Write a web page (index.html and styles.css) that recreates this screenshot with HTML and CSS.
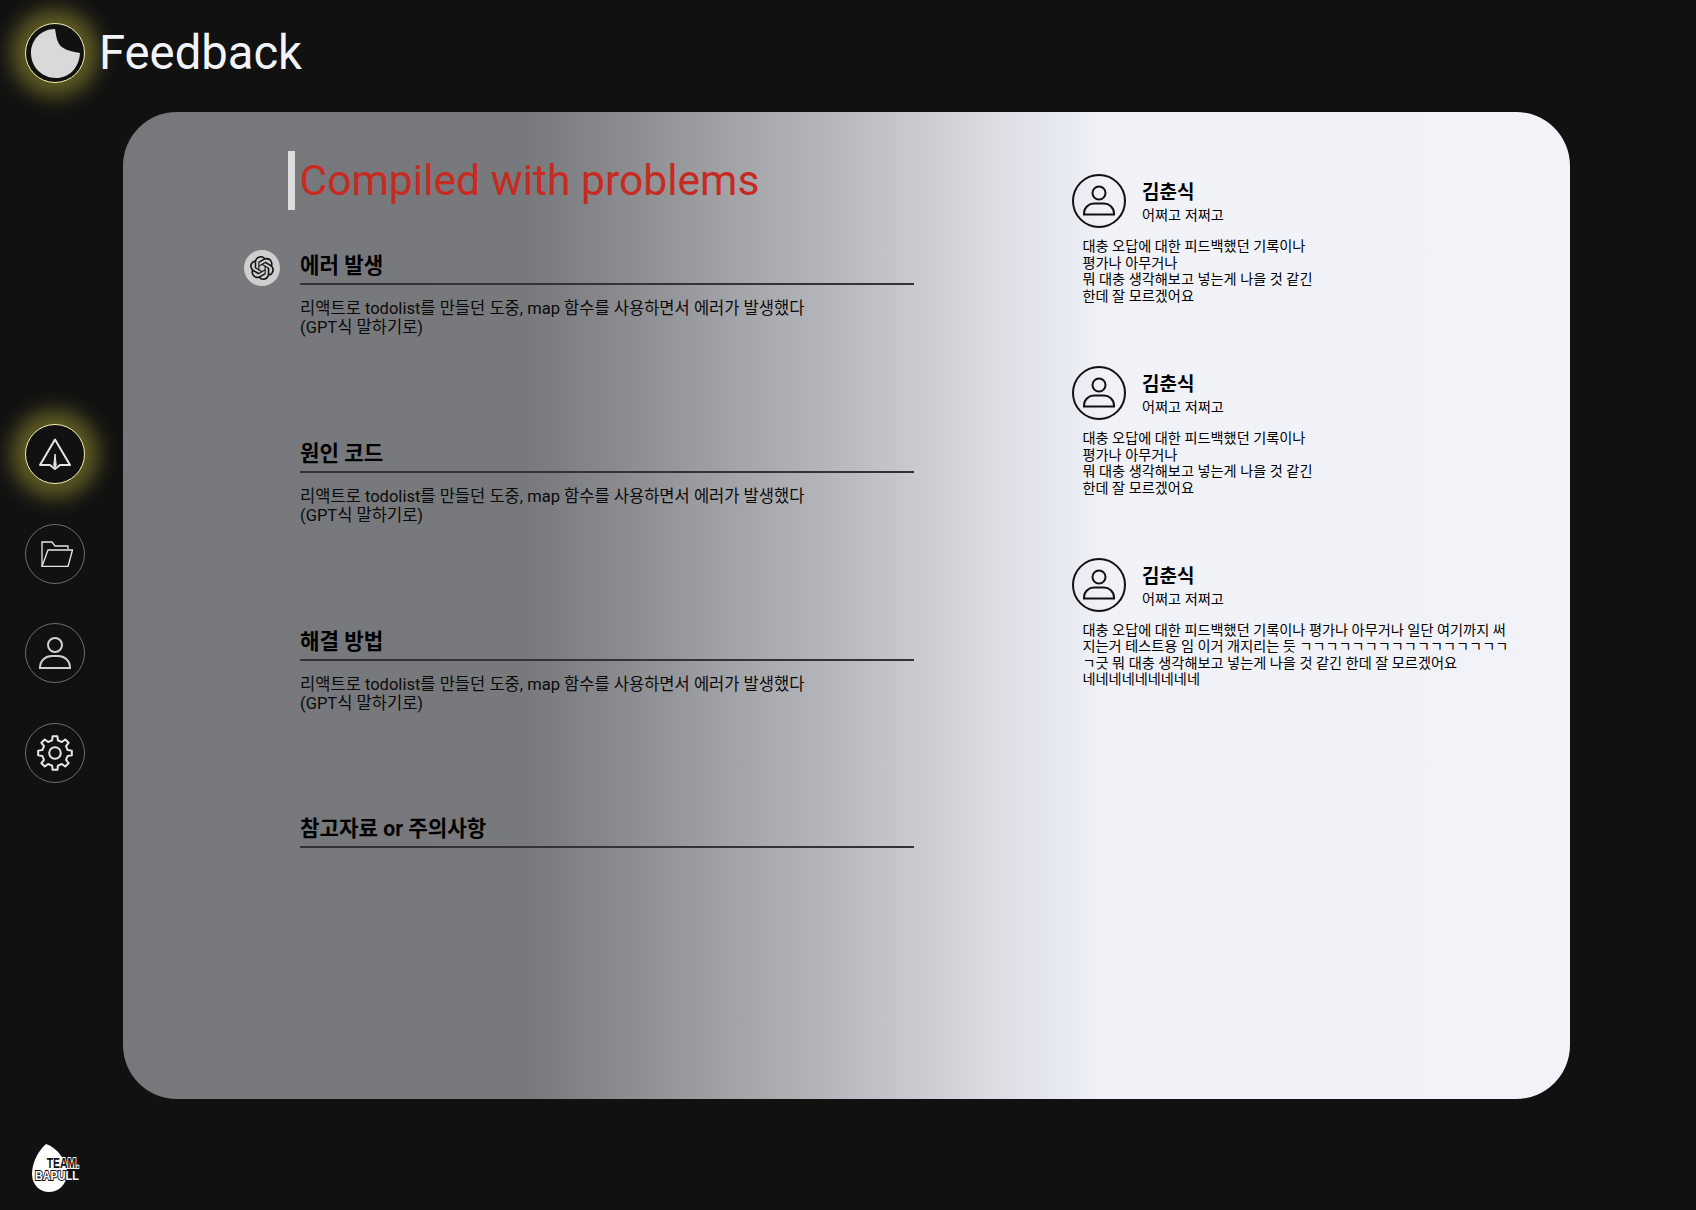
FILE: index.html
```html
<!DOCTYPE html>
<html lang="ko">
<head>
<meta charset="utf-8">
<title>Feedback</title>
<link rel="stylesheet" href="styles.css">
</head>
<body>
<div class="app">
  <header class="topbar">
    <div class="round-btn glow">
      <svg class="logo-sticker" viewBox="0 0 49 49"><path d="M24 0C10 0 0 11 0 24c0 14 11 25 25 25 13 0 23-10 24-25-11-2-19-4-22-11-2-4-2-9-3-13z" fill="#d9d9d9"/></svg>
    </div>
    <h1 class="app-title">Feedback</h1>
  </header>
  <div class="body-row">
    <nav class="side">
      <div class="nav-group">
        <button class="round-btn glow" aria-label="피드백">
          <svg class="nav-icon" viewBox="0 0 32 32" fill="none" stroke="#e6e6e6" stroke-width="2" stroke-linejoin="round"><path d="M16 1.500 L31 27 L21 27 L16 31 L11 27 L1 27 Z"/><path d="M16 16 L14.800 27 L16 29.500 L17.200 27 Z" fill="#e6e6e6" stroke-width="1"/></svg>
        </button>
        <button class="round-btn" aria-label="폴더">
          <svg class="nav-icon folder" viewBox="0 0 32 26" fill="none" stroke="#e6e6e6" stroke-width="1.300"><path d="M1 25V1h10l3 4h13v3"/><path d="M7 9h24.500l-4.500 16.500H1z"/></svg>
        </button>
        <button class="round-btn" aria-label="프로필">
          <svg class="nav-icon" viewBox="0 0 32 32" fill="none" stroke="#d0d0d0" stroke-width="2"><circle cx="16" cy="8" r="7"/><path d="M1 31c0-8 6-12 12-12h6c6 0 12 4 12 12z"/></svg>
        </button>
        <button class="round-btn" aria-label="설정">
          <svg class="nav-icon gear" viewBox="0 0 36 36" fill="none" stroke="#e6e6e6" stroke-width="2" stroke-linejoin="round"><circle cx="18" cy="18" r="5.800"/><path d="M15.080 5.330L15.630 1.170 20.370 1.170 20.920 5.330 24.890 6.980 28.230 4.420 31.580 7.770 29.020 11.110 30.670 15.080 34.830 15.630 34.830 20.370 30.670 20.920 29.020 24.890 31.580 28.230 28.230 31.580 24.890 29.020 20.920 30.670 20.370 34.830 15.630 34.830 15.080 30.670 11.110 29.020 7.770 31.580 4.420 28.230 6.980 24.890 5.330 20.920 1.170 20.370 1.170 15.630 5.330 15.080 6.980 11.110 4.420 7.770 7.770 4.420 11.110 6.980Z"/></svg>
        </button>
      </div>
      <div class="team">
        <svg class="drop" viewBox="0 0 35 48"><path d="M14 0C8 5 0 17 0 30c0 11 8 18 17 18s18-7 18-19C35 16 24 3 14 0z" fill="#fff"/></svg>
        <div class="team-text">
          <span class="team-a">TEAM.</span>
          <span class="team-b">BAPULL</span>
        </div>
      </div>
    </nav>
    <main class="panel">
      <section class="report">
        <h2 class="report-title">Compiled with problems</h2>
        <article class="block">
          <span class="gpt-badge">
            <svg viewBox="0 0 24 24"><path fill="#111" d="M22.2819 9.8211a5.9847 5.9847 0 0 0-.5157-4.9108 6.0462 6.0462 0 0 0-6.5098-2.9A6.0651 6.0651 0 0 0 4.9807 4.1818a5.9847 5.9847 0 0 0-3.9977 2.9 6.0462 6.0462 0 0 0 .7427 7.0966 5.98 5.98 0 0 0 .511 4.9107 6.051 6.051 0 0 0 6.5146 2.9001A5.9847 5.9847 0 0 0 13.2599 24a6.0557 6.0557 0 0 0 5.7718-4.2058 5.9894 5.9894 0 0 0 3.9977-2.9001 6.0557 6.0557 0 0 0-.7475-7.0729zm-9.022 12.6081a4.4755 4.4755 0 0 1-2.8764-1.0408l.1419-.0804 4.7783-2.7582a.7948.7948 0 0 0 .3927-.6813v-6.7369l2.02 1.1686a.071.071 0 0 1 .038.052v5.5826a4.504 4.504 0 0 1-4.4945 4.4944zm-9.6607-4.1254a4.4708 4.4708 0 0 1-.5346-3.0137l.142.0852 4.783 2.7582a.7712.7712 0 0 0 .7806 0l5.8428-3.3685v2.3324a.0804.0804 0 0 1-.0332.0615L9.74 19.9502a4.4992 4.4992 0 0 1-6.1408-1.6464zM2.3408 7.8956a4.485 4.485 0 0 1 2.3655-1.9728V11.6a.7664.7664 0 0 0 .3879.6765l5.8144 3.3543-2.0201 1.1685a.0757.0757 0 0 1-.071 0l-4.8303-2.7865A4.504 4.504 0 0 1 2.3408 7.872zm16.5963 3.8558L13.1038 8.364 15.1192 7.2a.0757.0757 0 0 1 .071 0l4.8303 2.7913a4.4944 4.4944 0 0 1-.6765 8.1042v-5.6772a.79.79 0 0 0-.407-.667zm2.0107-3.0231l-.142-.0852-4.7735-2.7818a.7759.7759 0 0 0-.7854 0L9.409 9.2297V6.8974a.0662.0662 0 0 1 .0284-.0615l4.8303-2.7866a4.4992 4.4992 0 0 1 6.6802 4.66zM8.3065 12.863l-2.02-1.1638a.0804.0804 0 0 1-.038-.0567V6.0742a4.4992 4.4992 0 0 1 7.3757-3.4537l-.142.0805L8.704 5.459a.7948.7948 0 0 0-.3927.6813zm1.0976-2.3654l2.602-1.4998 2.6069 1.4998v2.9994l-2.5974 1.4997-2.6067-1.4997Z"/></svg>
          </span>
          <h3 class="block-head">에러 발생</h3>
          <p class="block-text">리액트로 todolist를 만들던 도중, map 함수를 사용하면서 에러가 발생했다<br>(GPT식 말하기로)</p>
        </article>
        <article class="block">
          <h3 class="block-head">원인 코드</h3>
          <p class="block-text">리액트로 todolist를 만들던 도중, map 함수를 사용하면서 에러가 발생했다<br>(GPT식 말하기로)</p>
        </article>
        <article class="block">
          <h3 class="block-head">해결 방법</h3>
          <p class="block-text">리액트로 todolist를 만들던 도중, map 함수를 사용하면서 에러가 발생했다<br>(GPT식 말하기로)</p>
        </article>
        <article class="block">
          <h3 class="block-head">참고자료 or 주의사항</h3>
        </article>
      </section>
      <aside class="comments">
        <div class="comment">
          <div class="who">
            <svg class="avatar" viewBox="0 0 54 54" fill="none" stroke="#111" stroke-width="2"><circle cx="27" cy="27" r="26"/><circle cx="27" cy="19" r="6.500"/><path d="M12 39.500c0-6 5-10 10-10h10c5 0 10 4 10 10v1H12z"/></svg>
            <div><div class="name">김춘식</div><div class="role">어쩌고 저쩌고</div></div>
          </div>
          <p class="msg">대충 오답에 대한 피드백했던 기록이나<br>평가나 아무거나<br>뭐 대충 생각해보고 넣는게 나을 것 같긴<br>한데 잘 모르겠어요</p>
        </div>
        <div class="comment">
          <div class="who">
            <svg class="avatar" viewBox="0 0 54 54" fill="none" stroke="#111" stroke-width="2"><circle cx="27" cy="27" r="26"/><circle cx="27" cy="19" r="6.500"/><path d="M12 39.500c0-6 5-10 10-10h10c5 0 10 4 10 10v1H12z"/></svg>
            <div><div class="name">김춘식</div><div class="role">어쩌고 저쩌고</div></div>
          </div>
          <p class="msg">대충 오답에 대한 피드백했던 기록이나<br>평가나 아무거나<br>뭐 대충 생각해보고 넣는게 나을 것 같긴<br>한데 잘 모르겠어요</p>
        </div>
        <div class="comment">
          <div class="who">
            <svg class="avatar" viewBox="0 0 54 54" fill="none" stroke="#111" stroke-width="2"><circle cx="27" cy="27" r="26"/><circle cx="27" cy="19" r="6.500"/><path d="M12 39.500c0-6 5-10 10-10h10c5 0 10 4 10 10v1H12z"/></svg>
            <div><div class="name">김춘식</div><div class="role">어쩌고 저쩌고</div></div>
          </div>
          <p class="msg">대충 오답에 대한 피드백했던 기록이나 평가나 아무거나 일단 여기까지 써<br>지는거 테스트용 임 이거 개지리는 듯 ㄱㄱㄱㄱㄱㄱㄱㄱㄱㄱㄱㄱㄱㄱㄱㄱ<br>ㄱ긋 뭐 대충 생각해보고 넣는게 나을 것 같긴 한데 잘 모르겠어요<br>네네네네네네네네네</p>
        </div>
      </aside>
    </main>
  </div>
</div>
</body>
</html>
```
FILE: styles.css
```css
* { box-sizing: border-box; }
html, body { margin: 0; height: 100%; }
body {
  background: #111111;
  color: #000;
  font-family: Roboto, "Noto Sans CJK KR", sans-serif;
  overflow: hidden;
}
.app { width: 1696px; height: 1210px; display: flex; flex-direction: column; }
.topbar { height: 112px; padding: 23px 0 0 25px; display: flex; align-items: flex-start; gap: 14px; }
.app-title { margin: 0; font-size: 47.200px; line-height: 60px; font-weight: 400; color: #f3f4fa; }
.round-btn {
  width: 60px; height: 60px; flex: none; padding: 0;
  border-radius: 50%;
  border: 1px solid #6e6e6e;
  background: #111;
  display: flex; align-items: center; justify-content: center;
}
.glow { border: 1.500px solid #f4f0b0; box-shadow: 0 0 20px 14px rgba(112, 107, 40, .82); }
.logo-sticker { width: 49px; height: 49px; }
.body-row { flex: 1; display: flex; align-items: flex-start; }
.side { width: 123px; height: 1098px; padding-left: 25px; position: relative; flex: none; }
.nav-group { display: flex; flex-direction: column; gap: 39.670px; padding-top: 312px; }
.nav-icon { width: 32px; height: 32px; }
.folder { height: 26px; margin-left: 3px; }
.gear { width: 36px; height: 36px; }
.team { position: absolute; left: 32px; top: 1032px; width: 50px; height: 48px; }
.drop { position: absolute; left: 0; top: 0; width: 35px; height: 48px; }
.team-text {
  position: absolute; left: 3px; top: 13px; width: 44px;
  display: flex; flex-direction: column; align-items: flex-end;
  font-family: "Liberation Sans", sans-serif; font-weight: 700;
}
.team-a, .team-b { display: block; white-space: nowrap; paint-order: stroke fill; transform-origin: right center; }
.team-a { font-size: 14.500px; line-height: 13px; transform: scaleX(.72); color: #111; -webkit-text-stroke: 2px #fff; }
.team-b { font-size: 13.500px; line-height: 12px; transform: scaleX(.8); color: #fff; -webkit-text-stroke: 2px #111; }
.panel {
  width: 1446.500px; height: 987px; flex: none;
  border-radius: 54px;
  background: linear-gradient(90deg, #77787c 0%, #78797c 28%, #8c8d91 35%, #a1a2a6 41.500%, #b6b7bc 49%, #c7c8cd 54%, #dcdee4 60.500%, #e9ecf3 66%, #f1f2f8 67.600%, #f2f3f9 100%);
  display: flex;
  padding-top: 39px;
}
.report { width: 791px; padding-left: 164.500px; flex: none; }
.report-title {
  margin: 0 0 42px; height: 59px; padding-left: 5px;
  border-left: 7px solid #dcdcdc;
  font-size: 42.600px; line-height: 58px; font-weight: 400; color: #c62a20;
}
.block { position: relative; margin-left: 12.500px; height: 187.800px; }
.block-head { margin: 0 0 14px; height: 33px; font-size: 21.200px; line-height: 27px; font-weight: 700; border-bottom: 2px solid #333; }
.block-text { margin: 0; font-size: 16.550px; line-height: 19px; color: #0a0a0a; }
.gpt-badge { position: absolute; left: -56px; top: -2px; width: 36px; height: 36px; border-radius: 50%; background: #cecece; display: flex; align-items: center; justify-content: center; }
.gpt-badge svg { width: 24px; height: 24px; }
.comments { margin-left: 158px; padding-top: 23px; display: flex; flex-direction: column; gap: 58px; }
.comment { height: 134px; }
.comment:last-child .msg { margin-top: 9.800px; }
.who { display: flex; align-items: flex-start; gap: 16px; }
.avatar { width: 54px; height: 54px; flex: none; }
.name { font-size: 19px; line-height: 26px; font-weight: 700; margin-top: 6px; }
.role { font-size: 14.200px; line-height: 20px; margin-top: -1px; }
.msg { margin: 10px 0 0 10.500px; font-size: 14.200px; line-height: 16.500px; white-space: nowrap; }
```
